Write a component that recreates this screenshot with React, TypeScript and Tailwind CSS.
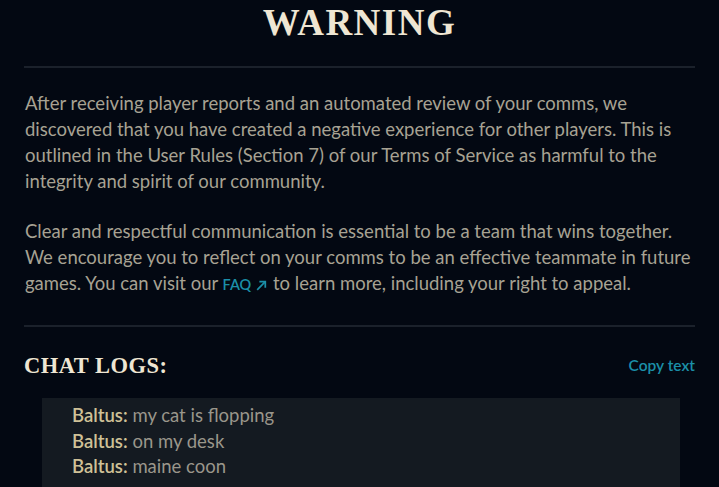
import React from 'react';

const chatLines = [
    { name: 'Baltus', text: 'my cat is flopping' },
    { name: 'Baltus', text: 'on my desk' },
    { name: 'Baltus', text: 'maine coon' },
];

const firstPara = [
    'After receiving player reports and an automated review of your comms, we',
    'discovered that you have created a negative experience for other players. This is',
    'outlined in the User Rules (Section 7) of our Terms of Service as harmful to the',
    'integrity and spirit of our community.',
];

const App = () => {
    return (
        <div className="w-[719px] h-[487px] overflow-hidden bg-[#030812] px-6 font-['Lato','Noto_Sans',sans-serif]">
            <h1 className="pt-[4px] text-center text-[37px] leading-[38px] font-bold tracking-[1.5px] text-[#efe6d3] font-['Liberation_Serif','DejaVu_Serif',serif]">
                WARNING
            </h1>

            <div className="mt-[24px] h-[2px] bg-[#1b212b]" />

            <div className="pt-[22px] text-[18.5px] leading-[26px] text-[#a7a293]">
                <p className="ml-[1px]">
                    {firstPara.map((line, i) => (
                        <span key={i} className="block whitespace-nowrap">{line}</span>
                    ))}
                </p>
                <p className="mt-[24px] ml-[1px]">
                    <span className="block whitespace-nowrap">Clear and respectful communication is essential to be a team that wins together.</span>
                    <span className="block whitespace-nowrap">We encourage you to reflect on your comms to be an effective teammate in future</span>
                    <span className="block whitespace-nowrap">
                        games. You can visit our{' '}
                        <a className="inline-flex items-center gap-[4px] text-[14.5px] text-[#1b8fa8] font-semibold">
                            FAQ
                            <svg width="13" height="13" viewBox="0 0 12 12" fill="none" stroke="currentColor" strokeWidth="1.6">
                                <path d="M2 10 L9.5 2.5" />
                                <path d="M4 2.5 H9.5 V8" />
                            </svg>
                        </a>{' '}
                        to learn more, including your right to appeal.
                    </span>
                </p>
            </div>

            <div className="mt-[27px] h-[2px] bg-[#1b212b]" />

            <div className="mt-[22px] flex items-center justify-between">
                <h2 className="text-[22.5px] leading-[34px] font-bold tracking-[0.5px] text-[#efe6d3] font-['Liberation_Serif','DejaVu_Serif',serif]">
                    CHAT LOGS:
                </h2>
                <button className="text-[15.5px] font-semibold text-[#1b8fa8]">Copy text</button>
            </div>

            <div className="mt-[15px] ml-[18px] mr-[15px] bg-[#141a21] pl-[30px] pt-[5px] pb-[10px] text-[18.5px] leading-[25.5px]">
                {chatLines.map((line, i) => (
                    <p key={i} className="text-[#9a968b]">
                        <span className="font-semibold text-[#cfc197]">{line.name}:</span> {line.text}
                    </p>
                ))}
            </div>
        </div>
    );
};

export default App;
